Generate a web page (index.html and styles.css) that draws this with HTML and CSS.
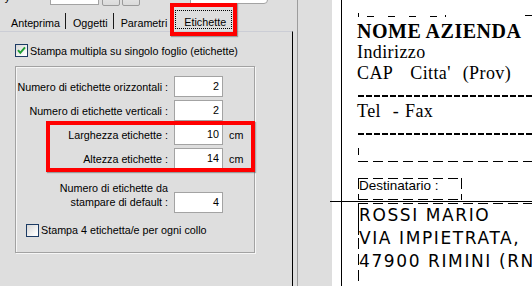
FILE: index.html
```html
<!DOCTYPE html>
<html lang="it">
<head>
<meta charset="utf-8">
<title>Etichette</title>
<link rel="stylesheet" href="styles.css">
</head>
<body>
<div class="app">
  <section class="dialog">
    <div class="toolbar">
      <span class="tb-label">y</span>
      <span class="tb-input"></span>
      <span class="tb-btn"></span>
      <span class="tb-btn"></span>
      <span class="tb-combo"></span>
    </div>
    <div class="tabs">
      <div class="tab">Anteprima</div>
      <div class="tab">Oggetti</div>
      <div class="tab tab-before-active">Parametri</div>
      <div class="tab active"><span class="focus">Etichette</span></div>
    </div>
    <div class="panel">
      <div class="check-row top-check">
        <span class="checkbox"><svg class="tick" viewBox="0 0 11 11" width="11" height="11"><path d="M2 5.2 4.3 7.8 9 2.4" fill="none" stroke="#1f9e33" stroke-width="2"/></svg></span>
        <span>Stampa multipla su singolo foglio (etichette)</span>
      </div>
      <div class="group">
        <div class="fields">
          <div class="field"><span class="label">Numero di etichette orizzontali :</span><span class="input">2</span></div>
          <div class="field"><span class="label">Numero di etichette verticali :</span><span class="input">2</span></div>
          <div class="highlight">
            <div class="field"><span class="label">Larghezza etichette :</span><span class="input">10</span><span class="unit">cm</span></div>
            <div class="field"><span class="label">Altezza etichette :</span><span class="input">14</span><span class="unit">cm</span></div>
          </div>
          <div class="field field-tall"><span class="label">Numero di etichette da<br>stampare di default :</span><span class="input">4</span></div>
          <div class="check-row inner-check">
            <span class="checkbox"></span>
            <span>Stampa 4 etichetta/e per ogni collo</span>
          </div>
        </div>
      </div>
    </div>
  </section>
  <div class="splitter"></div>
  <section class="preview">
    <div class="page">
      <div class="sender-clip">
        <div class="sender-box">Mittente :</div>
        <span class="corner-dash"></span>
      </div>
      <div class="company">NOME AZIENDA</div>
      <div class="line">Indirizzo</div>
      <div class="line">CAP   Citta'  (Prov)</div>
      <div class="rule rule-first"></div>
      <div class="line tel">Tel  - Fax</div>
      <div class="rule rule-second"></div>
      <div class="empty-box"></div>
      <div class="dest-box">Destinatario :</div>
      <div class="address-box">
        <div>ROSSI MARIO</div>
        <div>VIA IMPIETRATA,</div>
        <div>47900 RIMINI (RN)</div>
      </div>
    </div>
    <div class="hline"></div>
  </section>
</div>
</body>
</html>
```

FILE: styles.css
```css
html, body {
  margin: 0;
  padding: 0;
}
body {
  width: 532px;
  height: 286px;
  overflow: hidden;
  background: #dedede;
  font-family: "Liberation Sans", Arial, sans-serif;
  font-size: 10.75px;
  color: #000;
}
.app {
  display: flex;
  height: 286px;
}

/* ---------- dialog ---------- */
.dialog {
  flex: none;
  width: 293px;
  display: flex;
  flex-direction: column;
}
.toolbar {
  height: 6px;
  display: flex;
  align-items: flex-end;
  overflow: hidden;
}
.tb-label {
  width: 10px;
  text-align: right;
  line-height: 13px;
  margin-bottom: 2px;
}
.tb-input {
  width: 49px;
  height: 20px;
  margin-left: 40px;
  margin-bottom: 1px;
  box-sizing: border-box;
  background: #fff;
  border: 1px solid #a3a3a3;
}
.tb-btn {
  width: 18px;
  height: 20px;
  margin-left: 3px;
  box-sizing: border-box;
  background: linear-gradient(#f2f2f2, #dadada);
  border: 1px solid #9a9a9a;
  border-radius: 0 0 2px 2px;
}
.tb-btn + .tb-btn { margin-left: 2px; }
.tb-combo {
  width: 78px;
  height: 20px;
  margin-left: 50px;
  margin-bottom: 2px;
  box-sizing: border-box;
  background: #fff;
  border: 1px solid #a3a3a3;
  border-radius: 0 0 4px 0;
}

.tabs {
  height: 25px;
  display: flex;
  align-items: flex-end;
  padding-left: 4px;
}
.tab {
  height: 16px;
  box-sizing: border-box;
  margin-bottom: 2px;
  padding: 4px 5px 0 7px;
  line-height: 12px;
  border-right: 1px solid #1a1a1a;
  white-space: nowrap;
}
.tab-before-active { border-right-color: transparent; }
.tab.active {
  position: relative;
  height: 22px;
  margin-bottom: 0;
  padding: 1px 1px 0 2px;
  border-right: 1px solid #1a1a1a;
}
.focus {
  display: block;
  padding: 5px 5px 0 8px;
  line-height: 12px;
  border: 1px dotted #000;
}
.tab.active::after {
  content: "";
  position: absolute;
  left: -3px;
  top: -6px;
  right: -4px;
  bottom: -5px;
  border: 4px solid #f00;
  box-shadow: 1px 1px 1px rgba(0, 0, 0, 0.3);
}

.panel {
  flex: 1;
  border-top: 1px solid #cbcdd5;
  border-right: 1px solid #000;
  padding: 10px 0 0 15px;
}

.check-row {
  display: flex;
  align-items: center;
  gap: 2px;
  line-height: 13px;
  white-space: nowrap;
}
.checkbox {
  width: 13px;
  height: 13px;
  box-sizing: border-box;
  border: 1px solid #1c3b64;
  background: linear-gradient(135deg, #d6d6d6, #fbfbfb 80%);
  display: flex;
  align-items: center;
  justify-content: center;
  flex: none;
}
.top-check .checkbox { margin-top: 1px; }
.top-check span:last-child { padding-top: 3px; }

.group {
  width: 240px;
  box-sizing: border-box;
  margin-top: 8px;
  border: 1px solid #a2a2a2;
  box-shadow: inset 1px 1px 0 #f6f6f6, 1px 1px 0 #f6f6f6;
  padding: 9px 0 15px 0;
}
.fields {
  display: flex;
  flex-direction: column;
  gap: 3px;
}
.field {
  display: grid;
  grid-template-columns: 152px 49px auto;
  column-gap: 6px;
  align-items: center;
  height: 21px;
}
.label {
  text-align: right;
  white-space: nowrap;
}
.input {
  height: 21px;
  box-sizing: border-box;
  background: #fff;
  border: 1px solid #a3a3a3;
  text-align: right;
  padding-right: 3px;
  line-height: 19px;
}
.highlight {
  position: relative;
  display: flex;
  flex-direction: column;
  gap: 3px;
}
.highlight::after {
  content: "";
  position: absolute;
  left: 30px;
  right: -1px;
  top: -3px;
  bottom: -3px;
  border: 4px solid #f00;
  box-shadow: 1px 1px 1px rgba(0, 0, 0, 0.3);
}
.field-tall {
  height: auto;
  align-items: end;
  margin-top: 10px;
}
.field-tall .label {
  line-height: 13.5px;
  padding-bottom: 4px;
}
.inner-check {
  margin-top: 8px;
  padding-left: 10px;
}

.splitter {
  flex: none;
  width: 34px;
  margin-left: 4px;
  border-left: 1px solid #9c9c9c;
}

/* ---------- preview ---------- */
.preview {
  --dash-h: repeating-linear-gradient(90deg, #000 0 10px, transparent 10px 15px);
  --dash-v: repeating-linear-gradient(180deg, #000 0 11px, transparent 11px 16px);
  flex: 1;
  min-width: 0;
  position: relative;
  background: #fff;
  padding-left: 9px;
}
.page {
  height: 286px;
  overflow: hidden;
  border-left: 1px solid #000;
  padding-left: 15px;
  font-family: "Liberation Serif", "Times New Roman", serif;
  font-size: 18px;
}
.sender-clip {
  height: 19px;
  box-sizing: border-box;
  padding-bottom: 2px;
  display: flex;
  align-items: flex-end;
  overflow: hidden;
}
.sender-box {
  margin-left: 1px;
  width: 88px;
  box-sizing: border-box;
  padding: 0 2px 14px;
  font-family: "Liberation Sans", Arial, sans-serif;
  font-size: 13.5px;
  line-height: 14px;
  background:
    linear-gradient(#000, #000) left bottom / 1px 4px no-repeat,
    linear-gradient(#000, #000) right bottom / 1px 2px no-repeat,
    repeating-linear-gradient(90deg, transparent 0 9px, #000 9px 16px, transparent 16px 21px) left bottom / 100% 1px no-repeat;
}
.corner-dash {
  margin-left: auto;
  width: 7px;
  height: 1px;
  margin-bottom: 1px;
  background: #000;
}
.company {
  font-weight: bold;
  font-size: 20px;
  line-height: 22px;
  letter-spacing: 0.5px;
  padding-top: 1px;
  white-space: nowrap;
}
.line {
  line-height: 21px;
  letter-spacing: 0.4px;
  word-spacing: 1px;
  white-space: pre;
}
.rule {
  margin-left: 1px;
  height: 2px;
  background: repeating-linear-gradient(90deg, #000 0 6px, transparent 6px 8px);
}
.rule-first { margin-top: 11px; }
.tel { margin-top: 4px; }
.rule-second { margin-top: 11px; }
.empty-box {
  margin-left: 1px;
  margin-top: 13px;
  height: 14px;
  background:
    linear-gradient(#000, #000) left top / 1px 7px no-repeat,
    var(--dash-h) left bottom / 100% 1px no-repeat;
}
.dest-box {
  margin-left: 1px;
  margin-top: 16px;
  width: 104px;
  height: 22px;
  box-sizing: border-box;
  padding: 1px 0 0 1px;
  font-family: "Liberation Sans", Arial, sans-serif;
  font-size: 13.5px;
  line-height: 14px;
  white-space: nowrap;
  background:
    var(--dash-h) left top / 100% 1px no-repeat,
    var(--dash-h) left bottom / 100% 1px no-repeat,
    var(--dash-v) left top / 1px 100% no-repeat,
    var(--dash-v) right top / 1px 100% no-repeat;
}
.address-box {
  margin-left: 1px;
  margin-top: 3px;
  height: 90px;
  padding: 1px 0 0 1px;
  font-family: "DejaVu Sans", Verdana, sans-serif;
  font-size: 17px;
  line-height: 23px;
  letter-spacing: 1.6px;
  white-space: nowrap;
  background:
    var(--dash-h) left top / 100% 1px no-repeat,
    linear-gradient(#000, #000) left 1px / 1px 31px no-repeat,
    var(--dash-v) left 35px / 1px 100% no-repeat;
}
.hline {
  position: absolute;
  left: -2px;
  right: 0;
  top: 201px;
  height: 1px;
  background: #000;
}
```
